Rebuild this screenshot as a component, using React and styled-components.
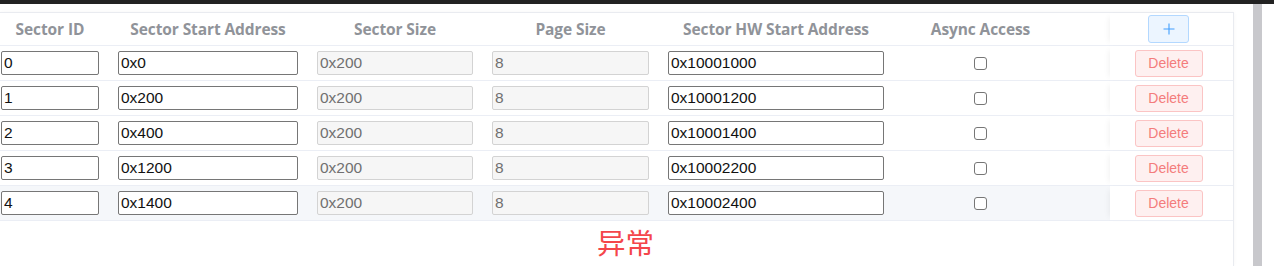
import styled, { createGlobalStyle } from 'styled-components';

const GlobalStyle = createGlobalStyle`
    html, body {
        margin: 0;
        padding: 0;
        background: #ffffff;
        overflow: hidden;
    }
    body {
        font-family: "Liberation Sans", Arial, sans-serif;
    }
`;

const sectors = [
    { id: '0', start: '0x0', size: '0x200', page: '8', hw: '0x10001000' },
    { id: '1', start: '0x200', size: '0x200', page: '8', hw: '0x10001200' },
    { id: '2', start: '0x400', size: '0x200', page: '8', hw: '0x10001400' },
    { id: '3', start: '0x1200', size: '0x200', page: '8', hw: '0x10002200' },
    { id: '4', start: '0x1400', size: '0x200', page: '8', hw: '0x10002400' },
];

const headers = [
    'Sector ID',
    'Sector Start Address',
    'Sector Size',
    'Page Size',
    'Sector HW Start Address',
    'Async Access',
];

export default function App() {
    return (
        <>
            <GlobalStyle />
            <TopBar />
            <Main>
                <Content>
                    <Panel>
                        <Table>
                            {headers.map((h, i) => (
                                <HeadCell key={h} $first={i === 0}>{h}</HeadCell>
                            ))}
                            <HeadCell />
                            <FixedCell $head>
                                <AddButton>
                                    <svg width="12" height="12" viewBox="0 0 12 12">
                                        <path d="M6 0.5V11.5M0.5 6H11.5" stroke="#409eff" strokeWidth="1.1" fill="none" />
                                    </svg>
                                </AddButton>
                            </FixedCell>

                            {sectors.map((s, i) => {
                                // last row is shown with the hover background
                                const hover = i === sectors.length - 1;
                                return [
                                    <Cell key={`a${i}`} $first $hover={hover}><TextInput defaultValue={s.id} /></Cell>,
                                    <Cell key={`b${i}`} $hover={hover}><TextInput defaultValue={s.start} /></Cell>,
                                    <Cell key={`c${i}`} $hover={hover}><TextInput disabled defaultValue={s.size} /></Cell>,
                                    <Cell key={`d${i}`} $hover={hover}><TextInput disabled defaultValue={s.page} /></Cell>,
                                    <Cell key={`e${i}`} $hover={hover}><TextInput defaultValue={s.hw} /></Cell>,
                                    <Cell key={`f${i}`} $hover={hover} $center><Check type="checkbox" /></Cell>,
                                    <Cell key={`g${i}`} $hover={hover} />,
                                    <FixedCell key={`h${i}`}><DeleteButton>Delete</DeleteButton></FixedCell>,
                                ];
                            })}
                        </Table>
                        <Message>异常</Message>
                    </Panel>
                </Content>
                <ScrollTrack>
                    <ScrollThumb />
                </ScrollTrack>
            </Main>
        </>
    );
}

const TopBar = styled.div`
    height: 4px;
    background: #222222;
`;

const Main = styled.div`
    display: flex;
    height: 262px;
`;

const Content = styled.div`
    width: 1252px;
    padding-top: 8px;
    box-sizing: border-box;
`;

const Panel = styled.div`
    width: 1234px;
    height: 100%;
    box-sizing: border-box;
    border-top: 1px solid #e9ebf0;
    border-right: 1px solid #e9ebf0;
    box-shadow: 0 0 4px rgba(0, 0, 0, 0.04);
`;

const Table = styled.div`
    display: grid;
    grid-template-columns: 108px 199px 175px 176px 235px 174px 43px 123px;
`;

const HeadCell = styled.div`
    height: 32px;
    border-bottom: 1px solid #ebeef5;
    display: flex;
    align-items: center;
    justify-content: center;
    padding: ${props => (props.$first ? '0 9px 0 1px' : '0 9px 0 10px')};
    font-family: "Open Sans", "Noto Sans", sans-serif;
    font-weight: 700;
    font-size: 15.5px;
    letter-spacing: -0.1px;
    color: #909399;
    white-space: nowrap;
`;

const Cell = styled.div`
    height: 34px;
    border-bottom: 1px solid #ebeef5;
    display: flex;
    align-items: center;
    justify-content: ${props => (props.$center ? 'center' : 'stretch')};
    padding: ${props => (props.$first ? '0 9px 0 1px' : '0 9px 0 10px')};
    background: ${props => (props.$hover ? '#f5f7fa' : '#ffffff')};
`;

const FixedCell = styled.div`
    height: ${props => (props.$head ? '32px' : '34px')};
    border-bottom: 1px solid #ebeef5;
    display: flex;
    align-items: center;
    justify-content: center;
    padding-right: 6px;
    background: #ffffff;
    box-shadow: -5px 0 6px -4px rgba(0, 0, 0, 0.06);
`;

const TextInput = styled.input`
    width: 100%;
    height: 24px;
    box-sizing: border-box;
    margin: 0;
    padding: 1px 2px;
    border: 1px solid #767676;
    border-radius: 2px;
    background: #ffffff;
    font-family: "Liberation Sans", Arial, sans-serif;
    font-size: 15.5px;
    color: #111111;
    outline: none;

    &:disabled {
        background: #f6f6f6;
        border-color: #d3d3d3;
        color: #707070;
    }
`;

const Check = styled.input`
    appearance: none;
    width: 13px;
    height: 13px;
    margin: 0;
    border: 1.5px solid #767676;
    border-radius: 3px;
    background: #ffffff;
    box-sizing: border-box;
`;

const DeleteButton = styled.button`
    width: 68px;
    height: 27px;
    border: 1px solid #fbc4c4;
    border-radius: 3px;
    background: #fef0f0;
    color: #f47c7c;
    font-family: "Liberation Sans", Arial, sans-serif;
    font-size: 14px;
    padding: 0;
`;

const AddButton = styled.button`
    width: 41px;
    height: 28px;
    border: 1px solid #b3d8ff;
    border-radius: 3px;
    background: #ecf5ff;
    display: flex;
    align-items: center;
    justify-content: center;
    padding: 0;
`;

const Message = styled.div`
    padding: 3px 0 0 18px;
    text-align: center;
    font-family: "Noto Sans CJK SC", sans-serif;
    font-size: 28.5px;
    line-height: 36px;
    color: #f4464b;
`;

const ScrollTrack = styled.div`
    width: 22px;
    padding-left: 1px;
    box-sizing: border-box;
`;

const ScrollThumb = styled.div`
    width: 9px;
    height: 100%;
    background: #c8c8cc;
`;
